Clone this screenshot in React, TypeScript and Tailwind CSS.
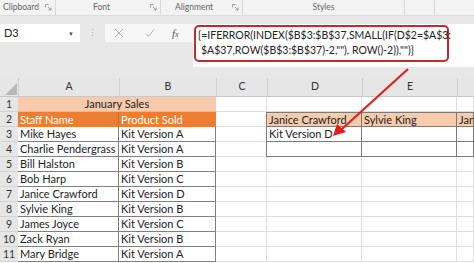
import React from 'react';

const font = { fontFamily: 'Lato, "Open Sans", sans-serif' };

const names = [
  'Mike Hayes',
  'Charlie Pendergrass',
  'Bill Halston',
  'Bob Harp',
  'Janice Crawford',
  'Sylvie King',
  'James Joyce',
  'Zack Ryan',
  'Mary Bridge',
];
const products = ['A', 'A', 'B', 'C', 'D', 'B', 'C', 'B', 'A'];

const cols = 'grid grid-cols-[18px_101px_97px_51px_95px_95px_1fr]';

function Launcher() {
  return (
    <svg width="7" height="7" viewBox="0 0 7 7" className="text-[#888]">
      <path d="M0.5 0.5h3M0.5 0.5v3M3 3l3 3M6 3.5V6H3.5" stroke="currentColor" strokeWidth="0.8" fill="none" />
    </svg>
  );
}

export default function App() {
  return (
    <div className="relative w-[474px] h-[263px] overflow-hidden bg-white text-[#222]" style={font}>
      {/* Ribbon group labels */}
      <div className="flex h-[16px] bg-[#f3f3f3] border-b border-[#dcdcdc] text-[8.5px] text-[#666]">
        <div className="w-[56px] flex items-center justify-between px-[3px] border-r border-[#d8d8d8]">
          <span>Clipboard</span>
          <Launcher />
        </div>
        <div className="w-[105px] flex items-center justify-between pl-[37px] pr-[3px] border-r border-[#d8d8d8]">
          <span>Font</span>
          <Launcher />
        </div>
        <div className="w-[82px] flex items-center justify-between pl-[14px] pr-[3px] border-r border-[#d8d8d8]">
          <span>Alignment</span>
          <Launcher />
        </div>
        <div className="w-[162px] flex items-center justify-center border-r border-[#d8d8d8]">
          <span>Styles</span>
        </div>
        <div className="w-[30px] border-r border-[#d8d8d8]" />
      </div>

      {/* Formula bar area */}
      <div className="flex items-start h-[62px] bg-[#e8e8e8] pt-[8px]">
        <div className="w-[80px] h-[18px] bg-white flex items-center justify-between pl-[4px] pr-[6px] text-[11px]">
          <span>D3</span>
          <span className="text-[6px] text-[#555]">▼</span>
        </div>
        <div className="w-[25px] h-[18px] flex items-center justify-center text-[#aaa] text-[9px]">⋮</div>
        <div className="w-[88px] h-[18px] bg-[#f7f7f7] flex items-center text-[#aaa]">
          <svg width="10" height="10" viewBox="0 0 10 10" className="ml-[9px]">
            <path d="M1 1l8 8M9 1l-8 8" stroke="#b0b0b0" strokeWidth="1" />
          </svg>
          <svg width="10" height="10" viewBox="0 0 10 10" className="ml-[21px]">
            <path d="M1 5.5l2.6 2.8L9 1.5" stroke="#b0b0b0" strokeWidth="1" fill="none" />
          </svg>
          <span className="ml-[17px] text-[11px] italic text-[#555]" style={{ fontFamily: '"Liberation Serif", serif' }}>
            f<span className="text-[8px]">x</span>
          </span>
        </div>
        <div className="flex-1 h-[43px] bg-white pl-[1px] pt-[1px]">
          <div className="w-[255px] h-[37px] border-2 border-[#c22a30] rounded-[5px] pl-[2px] pt-[1px] text-[10.5px] leading-[15px] text-[#222] whitespace-nowrap">
            <div>{'{=IFERROR(INDEX($B$3:$B$37,SMALL(IF(D$2=$A$3:'}</div>
            <div className="pl-[3px]">{'$A$37,ROW($B$3:$B$37)-2,""), ROW()-2)),"")}'}</div>
          </div>
        </div>
      </div>

      {/* Column headers */}
      <div className={`${cols} h-[19px] bg-[#e6e6e6] border-b border-[#c8c8c8] text-[10.5px] text-[#333]`}>
        <div className="flex items-end justify-end pr-[1px] pb-[1px]">
          <svg width="12" height="12" viewBox="0 0 12 12">
            <path d="M12 0V12H0Z" fill="#b8b8b8" />
          </svg>
        </div>
        {['A', 'B', 'C', 'D', 'E', ''].map((c, i) => (
          <div key={i} className="flex items-center justify-center border-l border-[#cfcfcf]">
            {c}
          </div>
        ))}
      </div>

      {/* Rows */}
      {Array.from({ length: 11 }).map((_, r) => {
        const row = r + 1;
        return (
          <div key={row} className={`${cols} h-[15px] text-[11px] leading-[14px]`}>
            <div className="bg-[#e6e6e6] border-b border-[#d4d4d4] flex items-center justify-center text-[#333] text-[10.5px]">
              {row}
            </div>
            {row === 1 && (
              <div className="col-span-2 bg-[#f8cbad] border-b border-[#e8b898] flex items-center justify-center">
                January Sales
              </div>
            )}
            {row === 2 && (
              <>
                <div className="bg-[#ed7d31] text-white border-r border-[#d06a25] flex items-center pl-[2px]">Staff Name</div>
                <div className="bg-[#ed7d31] text-white flex items-center pl-[2px]">Product Sold</div>
              </>
            )}
            {row >= 3 && (
              <>
                <div className="border-b border-r border-[#808080] flex items-center pl-[2px] whitespace-nowrap">
                  {names[row - 3]}
                </div>
                <div className="border-b border-r border-[#808080] flex items-center pl-[2px] whitespace-nowrap">
                  Kit Version {products[row - 3]}
                </div>
              </>
            )}
            <div className="border-b border-r border-[#e0e0e0]" />
            {row === 2 &&
              ['Janice Crawford', 'Sylvie King', 'James Joyce'].map((n) => (
                <div key={n} className="bg-[#f8cbad] border border-[#7a7a7a] -ml-[1px] flex items-center pl-[2px] whitespace-nowrap overflow-hidden">
                  {n}
                </div>
              ))}
            {(row === 3 || row === 4) &&
              [0, 1, 2].map((i) => (
                <div key={i} className="border-b border-r border-l border-[#7a7a7a] -ml-[1px] flex items-center pl-[2px] whitespace-nowrap">
                  {row === 3 && i === 0 ? 'Kit Version D' : ''}
                </div>
              ))}
            {row !== 2 && row !== 3 && row !== 4 &&
              [0, 1, 2].map((i) => <div key={i} className="border-b border-r border-[#e0e0e0]" />)}
          </div>
        );
      })}

      {/* Red arrow overlay */}
      <svg className="absolute left-0 top-0 pointer-events-none" width="474" height="263">
        <line x1="408" y1="69" x2="342" y2="129" stroke="#e02020" strokeWidth="2.2" />
        <path d="M333 136L337 124L346 132Z" fill="#e02020" />
      </svg>
    </div>
  );
}
